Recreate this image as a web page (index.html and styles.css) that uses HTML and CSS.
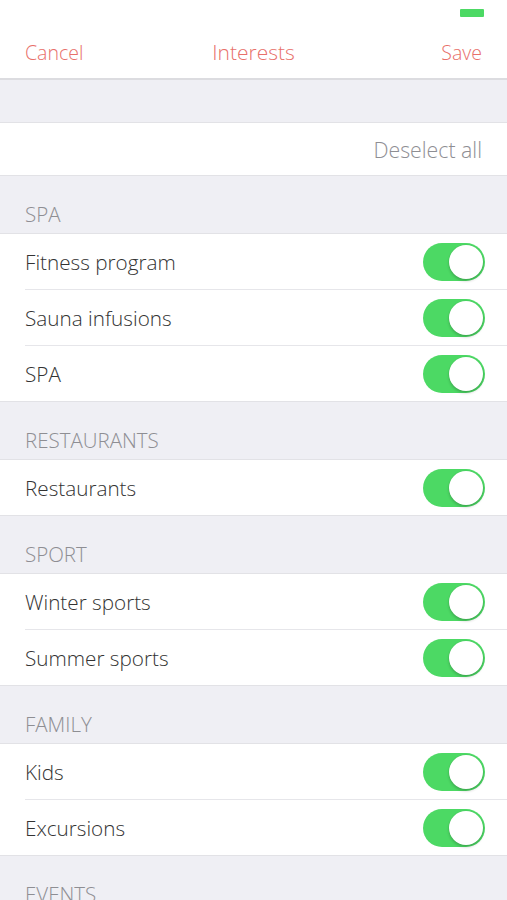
FILE: index.html
```html
<!DOCTYPE html>
<html>
<head>
<meta charset="utf-8">
<link rel="stylesheet" href="styles.css">
</head>
<body>
<div class="screen">
  <div class="status"><span class="battery"></span></div>
  <div class="nav">
    <span class="nav-btn nav-left">Cancel</span>
    <span class="nav-title">Interests</span>
    <span class="nav-btn nav-right">Save</span>
  </div>
  <div class="spacer"></div>
  <div class="group">
    <div class="row row-action"><span class="action">Deselect all</span></div>
  </div>

  <div class="header">SPA</div>
  <div class="group">
    <div class="row"><span class="label">Fitness program</span><span class="toggle"></span></div>
    <div class="row"><span class="label">Sauna infusions</span><span class="toggle"></span></div>
    <div class="row"><span class="label">SPA</span><span class="toggle"></span></div>
  </div>

  <div class="header">RESTAURANTS</div>
  <div class="group">
    <div class="row"><span class="label">Restaurants</span><span class="toggle"></span></div>
  </div>

  <div class="header">SPORT</div>
  <div class="group">
    <div class="row"><span class="label">Winter sports</span><span class="toggle"></span></div>
    <div class="row"><span class="label">Summer sports</span><span class="toggle"></span></div>
  </div>

  <div class="header">FAMILY</div>
  <div class="group">
    <div class="row"><span class="label">Kids</span><span class="toggle"></span></div>
    <div class="row"><span class="label">Excursions</span><span class="toggle"></span></div>
  </div>

  <div class="header">EVENTS</div>
</div>
</body>
</html>
```

FILE: styles.css
```css
html, body {
  margin: 0;
  padding: 0;
  background: #efeff4;
}
.screen {
  width: 507px;
  height: 900px;
  overflow: hidden;
  background: #efeff4;
  font-family: "Open Sans", "Liberation Sans", sans-serif;
  font-weight: 300;
}
.status {
  height: 26px;
  background: #fff;
  display: flex;
  justify-content: flex-end;
  align-items: flex-start;
  padding-right: 23px;
}
.battery {
  width: 24px;
  height: 8px;
  margin-top: 9px;
  background: #4cd964;
  border-radius: 1px;
}
.nav {
  height: 54px;
  box-sizing: border-box;
  background: #fff;
  border-bottom: 2px solid #dcdce0;
  display: grid;
  grid-template-columns: 1fr auto 1fr;
  align-items: center;
  padding: 0 25px 0 25px;
}
.nav-btn {
  color: #e8706a;
  font-size: 19.5px;
}
.nav-title {
  color: #e8706a;
  font-size: 21px;
}
.nav-right {
  justify-self: end;
}
.nav-left {
  justify-self: start;
}
.spacer {
  height: 42px;
}
.group {
  background: #fff;
  border-top: 1px solid #e2e2e6;
  border-bottom: 1px solid #e2e2e6;
}
.row {
  height: 55px;
  margin-left: 25px;
  padding-right: 22px;
  display: flex;
  align-items: center;
  justify-content: space-between;
  border-top: 1px solid #e6e6ea;
}
.row:first-child {
  border-top: none;
}
.row-action {
  height: 52px;
  justify-content: flex-end;
  padding-right: 25px;
}
.action {
  color: #8e8e93;
  font-size: 21.3px;
  font-weight: 350;
}
.label {
  color: #333;
  font-size: 20.7px;
  font-weight: 330;
}
.header {
  height: 57px;
  box-sizing: border-box;
  padding: 22px 25px 0 25px;
  color: #8e8e93;
  font-size: 20.5px;
  line-height: 32px;
}
.toggle {
  position: relative;
  width: 62px;
  height: 38px;
  border-radius: 19px;
  background: #4cd964;
  flex: none;
}
.toggle::after {
  content: "";
  position: absolute;
  right: 2px;
  top: 2px;
  width: 34px;
  height: 34px;
  border-radius: 50%;
  background: #fff;
  box-shadow: 0 2px 3px rgba(0,0,0,0.2), 0 0 0 0.5px rgba(0,0,0,0.05);
}
```
